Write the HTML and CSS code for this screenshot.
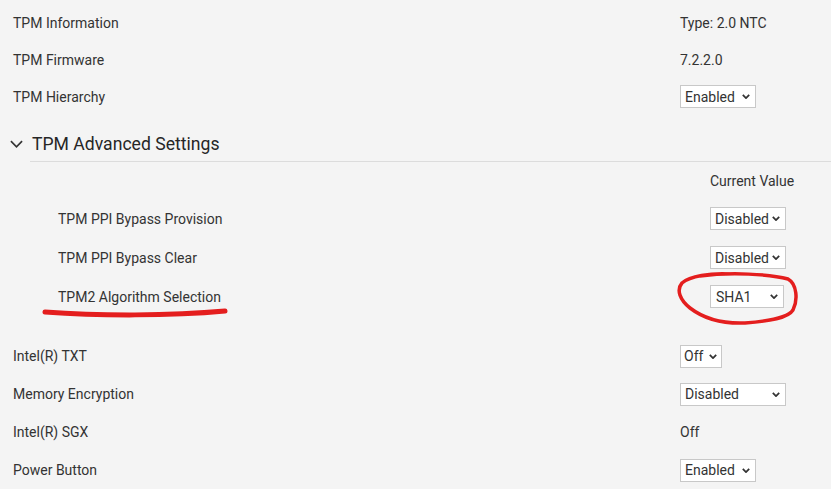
FILE: index.html
```html
<!DOCTYPE html>
<html>
<head>
<meta charset="utf-8">
<link rel="stylesheet" href="styles.css">
</head>
<body>
<div class="page">
  <div class="row"><div class="label">TPM Information</div><div class="value">Type: 2.0 NTC</div></div>
  <div class="row"><div class="label">TPM Firmware</div><div class="value">7.2.2.0</div></div>
  <div class="row"><div class="label">TPM Hierarchy</div><div class="value"><div class="select w76"><span>Enabled</span><svg class="chev" viewBox="0 0 10 6"><path d="M1 1 L5 5 L9 1"/></svg></div></div></div>

  <div class="section-head">
    <svg class="head-chev" viewBox="0 0 14 8"><path d="M1 1 L7 7 L13 1"/></svg>
    <span class="head-title">TPM Advanced Settings</span>
  </div>
  <div class="divider"></div>

  <div class="sub">
    <div class="subrow head"><div class="label"></div><div class="value">Current Value</div></div>
    <div class="subrow"><div class="label">TPM PPI Bypass Provision</div><div class="value"><div class="select w76"><span>Disabled</span><svg class="chev" viewBox="0 0 10 6"><path d="M1 1 L5 5 L9 1"/></svg></div></div></div>
    <div class="subrow"><div class="label">TPM PPI Bypass Clear</div><div class="value"><div class="select w76"><span>Disabled</span><svg class="chev" viewBox="0 0 10 6"><path d="M1 1 L5 5 L9 1"/></svg></div></div></div>
    <div class="subrow"><div class="label">TPM2 Algorithm Selection</div><div class="value"><div class="select w74"><span>SHA1</span><svg class="chev" viewBox="0 0 10 6"><path d="M1 1 L5 5 L9 1"/></svg></div></div></div>
  </div>

  <div class="lower">
    <div class="row r38"><div class="label">Intel(R) TXT</div><div class="value"><div class="select w42"><span>Off</span><svg class="chev" viewBox="0 0 10 6"><path d="M1 1 L5 5 L9 1"/></svg></div></div></div>
    <div class="row r38"><div class="label">Memory Encryption</div><div class="value"><div class="select w106"><span>Disabled</span><svg class="chev" viewBox="0 0 10 6"><path d="M1 1 L5 5 L9 1"/></svg></div></div></div>
    <div class="row r38"><div class="label">Intel(R) SGX</div><div class="value">Off</div></div>
    <div class="row r38"><div class="label">Power Button</div><div class="value"><div class="select w76"><span>Enabled</span><svg class="chev" viewBox="0 0 10 6"><path d="M1 1 L5 5 L9 1"/></svg></div></div></div>
  </div>

  <svg class="annot" viewBox="0 0 831 489" width="831" height="489">
    <path class="line" d="M45 312 C 100 316, 170 316, 225 311" />
    <path d="M700 276 C 730 272, 770 274, 788 279 C 797 284, 798 300, 793 310 C 788 318, 770 321, 745 323 C 720 324, 703 318, 690 308 C 680 300, 676 290, 682 283 C 690 276, 710 273, 730 274" />
  </svg>
</div>
</body>
</html>
```

FILE: styles.css
```css
html, body {
  margin: 0;
  padding: 0;
  background: #f4f4f4;
}
body {
  font-family: Roboto, "Liberation Sans", sans-serif;
  font-size: 14px;
  color: #333;
  width: 831px;
  height: 489px;
  overflow: hidden;
}
.page {
  position: relative;
  padding-top: 4px;
}
.row {
  display: grid;
  grid-template-columns: 667px 1fr;
  padding-left: 13px;
  height: 37px;
  align-items: center;
}
.row.r38 {
  height: 38px;
}
.value {
  display: flex;
  align-items: center;
}
.select {
  box-sizing: border-box;
  height: 23px;
  background: #fff;
  border: 1px solid #c8c8c8;
  display: flex;
  align-items: center;
  justify-content: space-between;
  padding: 0 5px 0 4px;
  color: #333;
  font-size: 14px;
}
.w76 { width: 76px; }
.w74 { width: 74px; padding-left: 5px; }
.w42 { width: 42px; padding-left: 3px; padding-right: 4px; }
.w106 { width: 106px; }
.chev {
  width: 8px;
  height: 5px;
  fill: none;
  stroke: #333;
  stroke-width: 2.2;
}
.section-head {
  margin-top: 12px;
  height: 34px;
  display: flex;
  align-items: center;
  padding-left: 10px;
  gap: 9px;
}
.head-chev {
  width: 13px;
  height: 8px;
  fill: none;
  stroke: #333;
  stroke-width: 1.8;
}
.head-title {
  font-size: 17.6px;
  color: #262626;
}
.divider {
  margin-left: 30px;
  border-top: 1px solid #dcdcdc;
}
.sub {
  padding-left: 58px;
}
.subrow {
  display: grid;
  grid-template-columns: 652px 1fr;
  height: 39px;
  align-items: center;
}
.subrow.head {
  height: 37px;
}
.lower {
  margin-top: 21px;
}
.annot {
  position: absolute;
  left: 0;
  top: 0;
  pointer-events: none;
  fill: none;
  stroke: #e41e1e;
  stroke-width: 3.5;
  stroke-linecap: round;
  stroke-linejoin: round;
}
.annot .line {
  stroke-width: 5;
}
```
